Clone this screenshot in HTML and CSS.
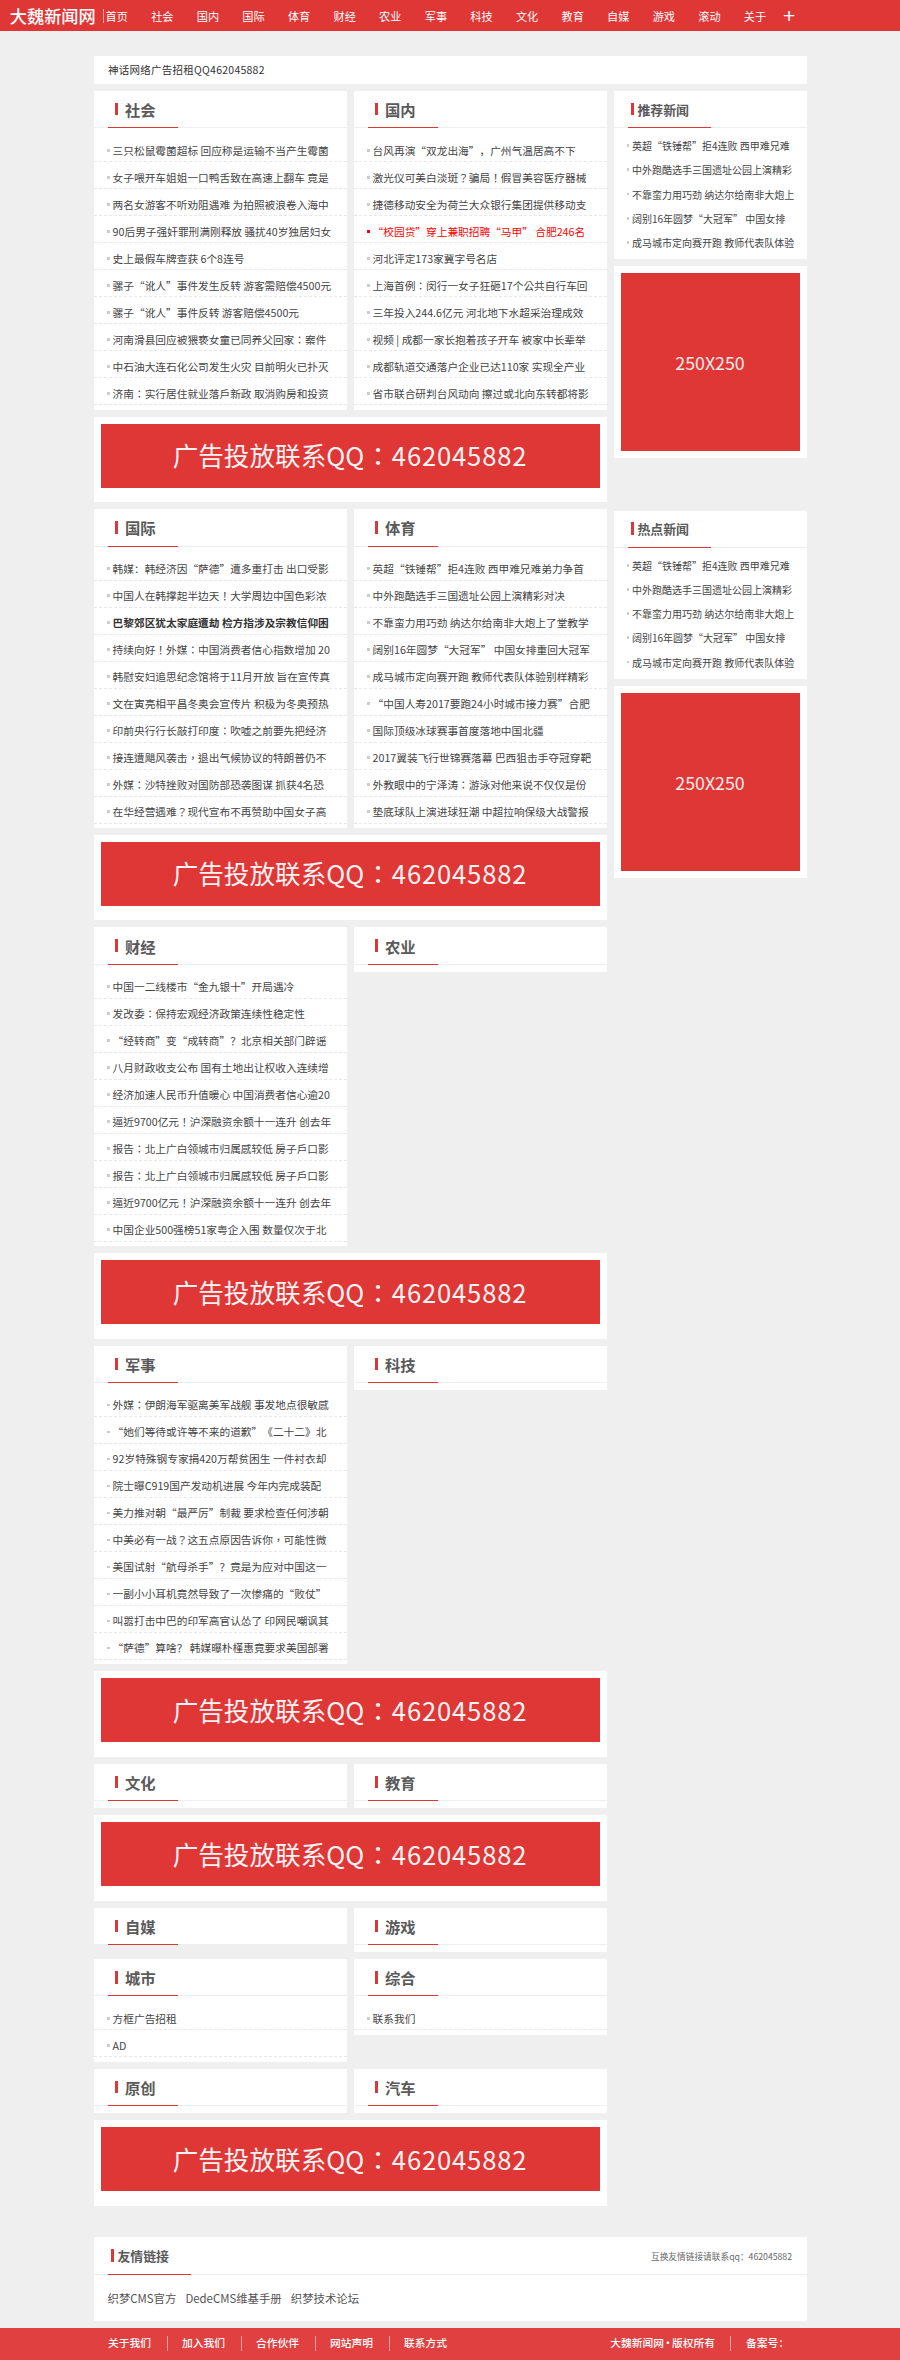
FILE: index.html
```html
<!DOCTYPE html>
<html lang="zh-CN">

<head>
    <meta charset="utf-8">
    <title>大魏新闻网</title>
    <link rel="stylesheet" href="styles.css">
</head>

<body>
    <div class="top-bar">
        <a class="logo" href="#">大魏新闻网</a>
        <ul class="nav">
            <li><a href="#">首页</a></li>
            <li><a href="#">社会</a></li>
            <li><a href="#">国内</a></li>
            <li><a href="#">国际</a></li>
            <li><a href="#">体育</a></li>
            <li><a href="#">财经</a></li>
            <li><a href="#">农业</a></li>
            <li><a href="#">军事</a></li>
            <li><a href="#">科技</a></li>
            <li><a href="#">文化</a></li>
            <li><a href="#">教育</a></li>
            <li><a href="#">自媒</a></li>
            <li><a href="#">游戏</a></li>
            <li><a href="#">滚动</a></li>
            <li><a href="#">关于</a></li>
            <li class="nav-more"><a href="#">+</a></li>
        </ul>
    </div>

    <div class="wrap">
        <div class="notice">神话网络广告招租QQ462045882</div>

        <div class="main">
            <div class="main-left">
                <div class="row">
                    <div class="card">
                        <div class="hd"><h3 class="tit">社会</h3></div>
                        <ul class="list">
                            <li><a href="#">三只松鼠霉菌超标 回应称是运输不当产生霉菌</a></li>
                            <li><a href="#">女子喂开车姐姐一口鸭舌致在高速上翻车 竟是</a></li>
                            <li><a href="#">两名女游客不听劝阻遇难 为拍照被浪卷入海中</a></li>
                            <li><a href="#">90后男子强奸罪刑满刚释放 骚扰40岁独居妇女</a></li>
                            <li><a href="#">史上最假车牌查获 6个8连号</a></li>
                            <li><a href="#">骡子“讹人”事件发生反转 游客需赔偿4500元</a></li>
                            <li><a href="#">骡子“讹人”事件反转 游客赔偿4500元</a></li>
                            <li lang="zh-Hant"><a href="#">河南滑县回应被猥亵女童已同养父回家：案件</a></li>
                            <li><a href="#">中石油大连石化公司发生火灾 目前明火已扑灭</a></li>
                            <li lang="zh-Hant"><a href="#">济南：实行居住就业落户新政 取消购房和投资</a></li>
                        </ul>
                    </div>
                    <div class="card">
                        <div class="hd"><h3 class="tit">国内</h3></div>
                        <ul class="list">
                            <li><a href="#">台风再演“双龙出海”，广州气温居高不下</a></li>
                            <li lang="zh-Hant"><a href="#">激光仪可美白淡斑？骗局！假冒美容医疗器械</a></li>
                            <li><a href="#">捷德移动安全为荷兰大众银行集团提供移动支</a></li>
                            <li class="hot"><a href="#">“校园贷”穿上兼职招聘“马甲” 合肥246名</a></li>
                            <li><a href="#">河北评定173家冀字号名店</a></li>
                            <li lang="zh-Hant"><a href="#">上海首例：闵行一女子狂砸17个公共自行车回</a></li>
                            <li><a href="#">三年投入244.6亿元 河北地下水超采治理成效</a></li>
                            <li><a href="#">视频 | 成都一家长抱着孩子开车 被家中长辈举</a></li>
                            <li><a href="#">成都轨道交通落户企业已达110家 实现全产业</a></li>
                            <li><a href="#">省市联合研判台风动向 擦过或北向东转都将影</a></li>
                        </ul>
                    </div>
                </div>
                <div class="banner"><a class="banner-in" href="#"><span>广告投放联系QQ<span class="banner-colon" lang="zh-Hant">：</span><span class="banner-num">462045882</span></span></a></div>

                <div class="row">
                    <div class="card">
                        <div class="hd"><h3 class="tit">国际</h3></div>
                        <ul class="list">
                            <li><a href="#">韩媒：韩经济因“萨德”遭多重打击 出口受影</a></li>
                            <li lang="zh-Hant"><a href="#">中国人在韩撑起半边天！大学周边中国色彩浓</a></li>
                            <li class="strong"><a href="#">巴黎郊区犹太家庭遭劫 检方指涉及宗教信仰困</a></li>
                            <li lang="zh-Hant"><a href="#">持续向好！外媒：中国消费者信心指数增加 20</a></li>
                            <li><a href="#">韩慰安妇追思纪念馆将于11月开放 旨在宣传真</a></li>
                            <li><a href="#">文在寅亮相平昌冬奥会宣传片 积极为冬奥预热</a></li>
                            <li lang="zh-Hant"><a href="#">印前央行行长敲打印度：吹嘘之前要先把经济</a></li>
                            <li lang="zh-Hant"><a href="#">接连遭飓风袭击，退出气候协议的特朗普仍不</a></li>
                            <li lang="zh-Hant"><a href="#">外媒：沙特挫败对国防部恐袭图谋 抓获4名恐</a></li>
                            <li lang="zh-Hant"><a href="#">在华经营遇难？现代宣布不再赞助中国女子高</a></li>
                        </ul>
                    </div>
                    <div class="card">
                        <div class="hd"><h3 class="tit">体育</h3></div>
                        <ul class="list">
                            <li><a href="#">英超“铁锤帮”拒4连败 西甲难兄难弟力争首</a></li>
                            <li><a href="#">中外跑酷选手三国遗址公园上演精彩对决</a></li>
                            <li><a href="#">不靠蛮力用巧劲 纳达尔给南非大炮上了堂教学</a></li>
                            <li><a href="#">阔别16年圆梦“大冠军” 中国女排重回大冠军</a></li>
                            <li><a href="#">成马城市定向赛开跑 教师代表队体验别样精彩</a></li>
                            <li><a href="#">“中国人寿2017要跑24小时城市接力赛”合肥</a></li>
                            <li><a href="#">国际顶级冰球赛事首度落地中国北疆</a></li>
                            <li><a href="#">2017翼装飞行世锦赛落幕 巴西狙击手夺冠穿靶</a></li>
                            <li lang="zh-Hant"><a href="#">外教眼中的宁泽涛：游泳对他来说不仅仅是份</a></li>
                            <li><a href="#">垫底球队上演进球狂潮 中超拉响保级大战警报</a></li>
                        </ul>
                    </div>
                </div>
                <div class="banner"><a class="banner-in" href="#"><span>广告投放联系QQ<span class="banner-colon" lang="zh-Hant">：</span><span class="banner-num">462045882</span></span></a></div>

                <div class="row">
                    <div class="card">
                        <div class="hd"><h3 class="tit">财经</h3></div>
                        <ul class="list">
                            <li><a href="#">中国一二线楼市“金九银十”开局遇冷</a></li>
                            <li lang="zh-Hant"><a href="#">发改委：保持宏观经济政策连续性稳定性</a></li>
                            <li><a href="#">“经转商”变“成转商”？北京相关部门辟谣</a></li>
                            <li><a href="#">八月财政收支公布 国有土地出让权收入连续增</a></li>
                            <li><a href="#">经济加速人民币升值暖心 中国消费者信心逾20</a></li>
                            <li lang="zh-Hant"><a href="#">逼近9700亿元！沪深融资余额十一连升 创去年</a></li>
                            <li lang="zh-Hant"><a href="#">报告：北上广白领城市归属感较低 房子户口影</a></li>
                            <li lang="zh-Hant"><a href="#">报告：北上广白领城市归属感较低 房子户口影</a></li>
                            <li lang="zh-Hant"><a href="#">逼近9700亿元！沪深融资余额十一连升 创去年</a></li>
                            <li><a href="#">中国企业500强榜51家粤企入围 数量仅次于北</a></li>
                        </ul>
                    </div>
                    <div class="card">
                        <div class="hd"><h3 class="tit">农业</h3></div>
                        <ul class="list"></ul>
                    </div>
                </div>
                <div class="banner"><a class="banner-in" href="#"><span>广告投放联系QQ<span class="banner-colon" lang="zh-Hant">：</span><span class="banner-num">462045882</span></span></a></div>

                <div class="row">
                    <div class="card">
                        <div class="hd"><h3 class="tit">军事</h3></div>
                        <ul class="list">
                            <li lang="zh-Hant"><a href="#">外媒：伊朗海军驱离美军战舰 事发地点很敏感</a></li>
                            <li><a href="#">“她们等待或许等不来的道歉”《二十二》北</a></li>
                            <li><a href="#">92岁特殊钢专家捐420万帮贫困生 一件衬衣却</a></li>
                            <li><a href="#">院士曝C919国产发动机进展 今年内完成装配</a></li>
                            <li><a href="#">美力推对朝“最严厉”制裁 要求检查任何涉朝</a></li>
                            <li lang="zh-Hant"><a href="#">中美必有一战？这五点原因告诉你，可能性微</a></li>
                            <li><a href="#">美国试射“航母杀手”？竟是为应对中国这一</a></li>
                            <li><a href="#">一副小小耳机竟然导致了一次惨痛的“败仗”</a></li>
                            <li><a href="#">叫嚣打击中巴的印军高官认怂了 印网民嘲讽其</a></li>
                            <li><a href="#">“萨德”算啥？ 韩媒曝朴槿惠竟要求美国部署</a></li>
                        </ul>
                    </div>
                    <div class="card">
                        <div class="hd"><h3 class="tit">科技</h3></div>
                        <ul class="list"></ul>
                    </div>
                </div>
                <div class="banner"><a class="banner-in" href="#"><span>广告投放联系QQ<span class="banner-colon" lang="zh-Hant">：</span><span class="banner-num">462045882</span></span></a></div>

                <div class="row">
                    <div class="card">
                        <div class="hd"><h3 class="tit">文化</h3></div>
                        <ul class="list"></ul>
                    </div>
                    <div class="card">
                        <div class="hd"><h3 class="tit">教育</h3></div>
                        <ul class="list"></ul>
                    </div>
                </div>
                <div class="banner"><a class="banner-in" href="#"><span>广告投放联系QQ<span class="banner-colon" lang="zh-Hant">：</span><span class="banner-num">462045882</span></span></a></div>

                <div class="row">
                    <div class="card">
                        <div class="hd"><h3 class="tit">自媒</h3></div>
                    </div>
                    <div class="card">
                        <div class="hd"><h3 class="tit">游戏</h3></div>
                        <ul class="list"></ul>
                    </div>
                </div>

                <div class="row">
                    <div class="card">
                        <div class="hd"><h3 class="tit">城市</h3></div>
                        <ul class="list">
                            <li><a href="#">方框广告招租</a></li>
                            <li><a href="#">AD</a></li>
                        </ul>
                    </div>
                    <div class="card">
                        <div class="hd"><h3 class="tit">综合</h3></div>
                        <ul class="list">
                            <li><a href="#">联系我们</a></li>
                        </ul>
                    </div>
                </div>

                <div class="row">
                    <div class="card">
                        <div class="hd"><h3 class="tit">原创</h3></div>
                        <ul class="list"></ul>
                    </div>
                    <div class="card">
                        <div class="hd"><h3 class="tit">汽车</h3></div>
                        <ul class="list"></ul>
                    </div>
                </div>
                <div class="banner banner-last"><a class="banner-in" href="#"><span>广告投放联系QQ<span class="banner-colon" lang="zh-Hant">：</span><span class="banner-num">462045882</span></span></a></div>
            </div>

            <div class="main-right">
                <div class="card">
                    <div class="hd"><h3 class="tit tit-small">推荐新闻</h3></div>
                    <ul class="side-list">
                        <li><a href="#">英超“铁锤帮”拒4连败 西甲难兄难</a></li>
                        <li><a href="#">中外跑酷选手三国遗址公园上演精彩</a></li>
                        <li><a href="#">不靠蛮力用巧劲 纳达尔给南非大炮上</a></li>
                        <li><a href="#">阔别16年圆梦“大冠军” 中国女排</a></li>
                        <li><a href="#">成马城市定向赛开跑 教师代表队体验</a></li>
                    </ul>
                </div>
                <div class="side-ad"><a class="side-ad-in" href="#">250X250</a></div>

                <div class="card side-second">
                    <div class="hd"><h3 class="tit tit-small">热点新闻</h3></div>
                    <ul class="side-list">
                        <li><a href="#">英超“铁锤帮”拒4连败 西甲难兄难</a></li>
                        <li><a href="#">中外跑酷选手三国遗址公园上演精彩</a></li>
                        <li><a href="#">不靠蛮力用巧劲 纳达尔给南非大炮上</a></li>
                        <li><a href="#">阔别16年圆梦“大冠军” 中国女排</a></li>
                        <li><a href="#">成马城市定向赛开跑 教师代表队体验</a></li>
                    </ul>
                </div>
                <div class="side-ad"><a class="side-ad-in" href="#">250X250</a></div>
            </div>
        </div>

        <div class="card friend">
            <div class="hd friend-hd">
                <h3 class="tit tit-small">友情链接</h3>
                <span class="friend-tip">互换友情链接请联系qq：462045882</span>
            </div>
            <div class="friend-links">
                <a href="#">织梦CMS官方</a>
                <a href="#">DedeCMS维基手册</a>
                <a href="#">织梦技术论坛</a>
            </div>
        </div>
    </div>

    <div class="foot">
        <div class="foot-in">
            <ul class="foot-links">
                <li><a href="#">关于我们</a></li>
                <li><a href="#">加入我们</a></li>
                <li><a href="#">合作伙伴</a></li>
                <li><a href="#">网站声明</a></li>
                <li class="foot-end"><a href="#">联系方式</a></li>
            </ul>
            <ul class="foot-links foot-right">
                <li>大魏新闻网<span class="foot-dot">·</span>版权所有</li>
                <li class="foot-end">备案号：</li>
            </ul>
        </div>
    </div>
</body>

</html>
```

FILE: styles.css
```css
* {
    box-sizing: border-box;
}

body {
    margin: 0;
    background: #efefef;
    color: #444;
    font-family: "Noto Sans CJK SC", "Liberation Sans", sans-serif;
    font-size: 10.7px;
    text-spacing-trim: space-all;
}

a {
    color: inherit;
    text-decoration: none;
}

ul,
h3 {
    margin: 0;
    padding: 0;
    list-style-type: none;
}

.top-bar {
    display: flex;
    align-items: center;
    height: 31.3px;
    padding-left: 9.8px;
    background: #df3636;
    color: #fff;
}

.logo {
    margin-right: 7.5px;
    font-size: 17.2px;
    font-weight: 500;
    white-space: nowrap;
}

.nav {
    display: flex;
    align-items: center;
    height: 14px;
    padding-left: 1.3px;
    border-left: 1px solid #f3a3a3;
    font-size: 11.2px;
}

.nav li {
    width: 45.6px;
    white-space: nowrap;
}

.nav-more {
    margin-left: -6.5px;
    font-family: "Liberation Sans", sans-serif;
    font-size: 21px;
    line-height: 14px;
}

.wrap {
    width: 713px;
    margin: 24.7px auto 0;
}

.notice {
    height: 28px;
    margin-bottom: 7px;
    padding-left: 14.5px;
    background: #fff;
    color: #333;
    font-size: 10.5px;
    letter-spacing: 0.25px;
    line-height: 28px;
}

.main {
    display: flex;
    gap: 7px;
    align-items: flex-start;
}

.main-left {
    width: 513px;
}

.main-right {
    width: 193px;
}

.row {
    display: flex;
    gap: 7px;
    align-items: flex-start;
    margin-bottom: 7px;
}

.row .card {
    flex: 1 1 0;
}

.card {
    background: #fff;
}

.hd {
    height: 37.3px;
    padding-left: 14px;
    border-bottom: 1.3px solid #eee;
}

.tit {
    display: inline-flex;
    align-items: center;
    width: 70px;
    height: 37.3px;
    padding-left: 7px;
    border-bottom: 1.5px solid #df3636;
    color: #5a5a5a;
    font-size: 15.3px;
    font-weight: 700;
}

.tit::before {
    content: "";
    flex: none;
    width: 3.5px;
    height: 12.6px;
    margin-right: 7px;
    background: #df3636;
}

.tit-small {
    width: 83px;
    padding-left: 3.4px;
    font-size: 12.9px;
}

.tit-small::before {
    margin-right: 3px;
}

.list {
    padding: 7px 0 0 0;
}

.list li {
    display: flex;
    align-items: center;
    height: 27px;
    padding: 5px 0 1px 13.6px;
    border-bottom: 1px dashed #e8e8e8;
    white-space: nowrap;
}

.list li:last-child {
    margin-bottom: 4.4px;
}

.list li::before,
.side-list li::before {
    content: "";
    flex: none;
    width: 2.8px;
    height: 2.8px;
    margin-right: 2.7px;
    background: #ccc;
}

.list .hot {
    color: #f00;
}

.list .hot::before {
    background: #f00;
}

.list .strong {
    color: #333;
    font-weight: 700;
}

.side-list {
    padding: 5.3px 0 4.4px 13px;
    font-size: 10px;
}

.side-list li {
    display: flex;
    align-items: center;
    height: 24.2px;
    white-space: nowrap;
}

.banner {
    height: 85.55px;
    margin-bottom: 7px;
    padding: 7px 7px 14.55px;
    background: #fff;
}

.banner-last {
    margin-bottom: 0;
}

.banner-in {
    display: flex;
    align-items: center;
    justify-content: center;
    height: 64px;
    padding-bottom: 2px;
    background: #df3636;
    color: #fdf2f2;
    font-size: 25.6px;
    white-space: nowrap;
}

.banner-colon {
    margin: 0 1px;
}

.banner-num {
    letter-spacing: 0.85px;
}

.side-ad {
    margin-top: 7px;
    padding: 7px;
    background: #fff;
}

.side-ad-in {
    display: flex;
    align-items: center;
    justify-content: center;
    height: 178px;
    background: #df3636;
    color: #fbeaea;
    font-size: 17.8px;
}

.side-second {
    margin-top: 52.7px;
}

.friend {
    margin-top: 31.7px;
}

.friend-hd {
    display: flex;
    align-items: flex-start;
    justify-content: space-between;
    padding-right: 14.5px;
}

.friend-tip {
    margin-top: 15px;
    color: #666;
    font-size: 8.7px;
    line-height: 10px;
}

.friend-links {
    display: flex;
    gap: 9px;
    padding: 13px 14px;
    color: #555;
    font-size: 11.4px;
    line-height: 20px;
}

.foot {
    height: 32px;
    margin-top: 7px;
    background: #e04040;
    color: #fff;
}

.foot-in {
    display: flex;
    align-items: center;
    justify-content: space-between;
    width: 713px;
    height: 32px;
    margin: 0 auto;
    padding: 0 17.5px 0 14.5px;
}

.foot-links {
    display: flex;
    align-items: center;
    font-size: 10.75px;
    font-weight: 500;
}

.foot-links li {
    height: 14.7px;
    margin-right: 14.5px;
    padding-right: 15.5px;
    border-right: 1px solid #f0a0a0;
    line-height: 14.7px;
    white-space: nowrap;
}

.foot-links .foot-end {
    margin-right: 0;
    padding-right: 0;
    border-right: 0;
}

.foot-dot {
    margin: 0 -1.4px;
}
```
